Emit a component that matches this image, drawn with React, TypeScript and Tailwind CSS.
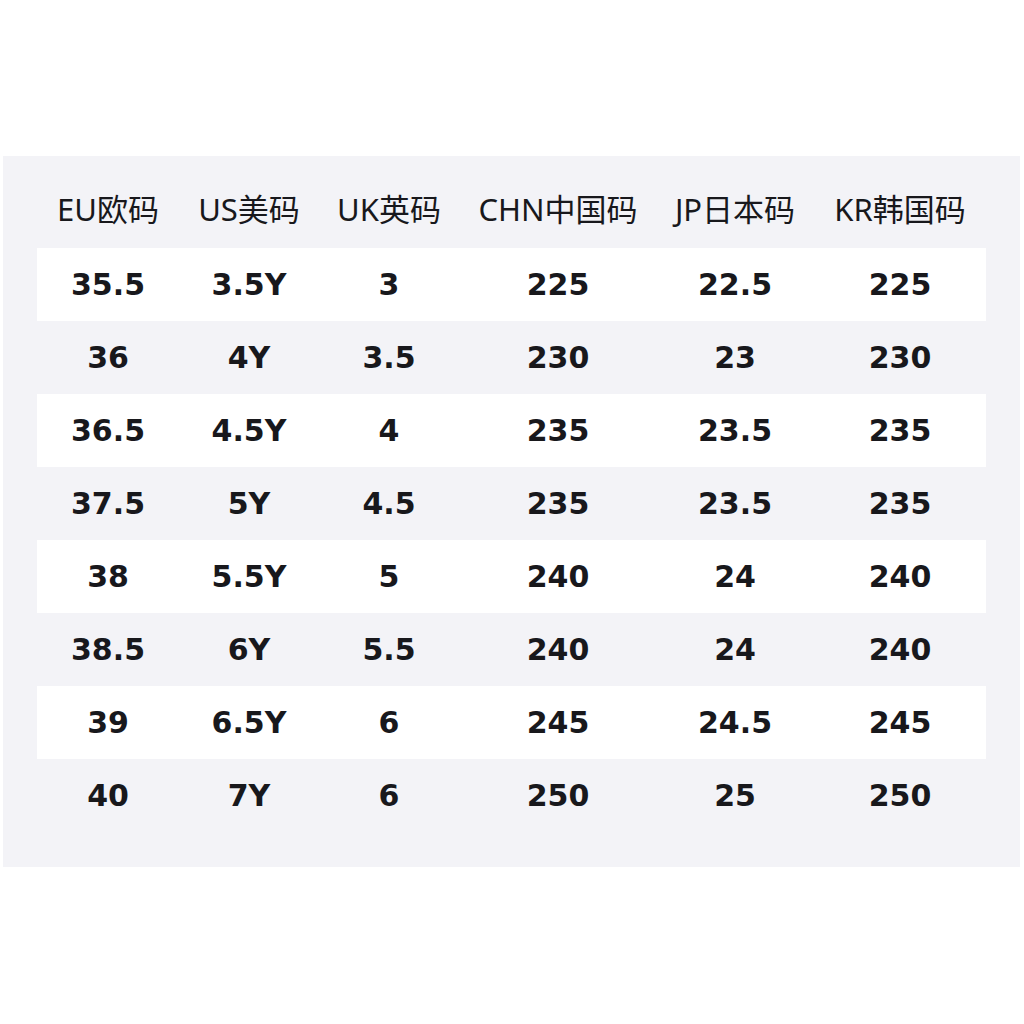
const headers = ["EU欧码", "US美码", "UK英码", "CHN中国码", "JP日本码", "KR韩国码"];

const rows = [
  ["35.5", "3.5Y", "3", "225", "22.5", "225"],
  ["36", "4Y", "3.5", "230", "23", "230"],
  ["36.5", "4.5Y", "4", "235", "23.5", "235"],
  ["37.5", "5Y", "4.5", "235", "23.5", "235"],
  ["38", "5.5Y", "5", "240", "24", "240"],
  ["38.5", "6Y", "5.5", "240", "24", "240"],
  ["39", "6.5Y", "6", "245", "24.5", "245"],
  ["40", "7Y", "6", "250", "25", "250"],
];

const cols = "grid grid-cols-[142px_140px_140px_198px_156px_174px]";

export default function App() {
  return (
    <div
      className="w-[1024px] h-[1024px] bg-white pt-[156px] pl-[3px] text-[#18181c]"
      style={{ fontFamily: '"DejaVu Sans", "Noto Sans CJK SC", sans-serif' }}
    >
      <div className="w-[1017px] h-[711px] bg-[#f3f3f7] px-[34px]">
        <div
          className={`${cols} h-[92px] items-end pb-[21px]`}
          style={{ fontFamily: '"Noto Sans", "Noto Sans CJK SC", sans-serif' }}
        >
          {headers.map((h) => (
            <div key={h} className="text-center text-[31px] leading-[36px] whitespace-nowrap">
              {h}
            </div>
          ))}
        </div>
        {rows.map((r, i) => (
          <div
            key={i}
            className={`${cols} h-[73px] items-center ${i % 2 === 0 ? "bg-white" : ""}`}
          >
            {r.map((c, j) => (
              <div key={j} className="text-center text-[30px] font-bold leading-[36px]">
                {c}
              </div>
            ))}
          </div>
        ))}
      </div>
    </div>
  );
}
